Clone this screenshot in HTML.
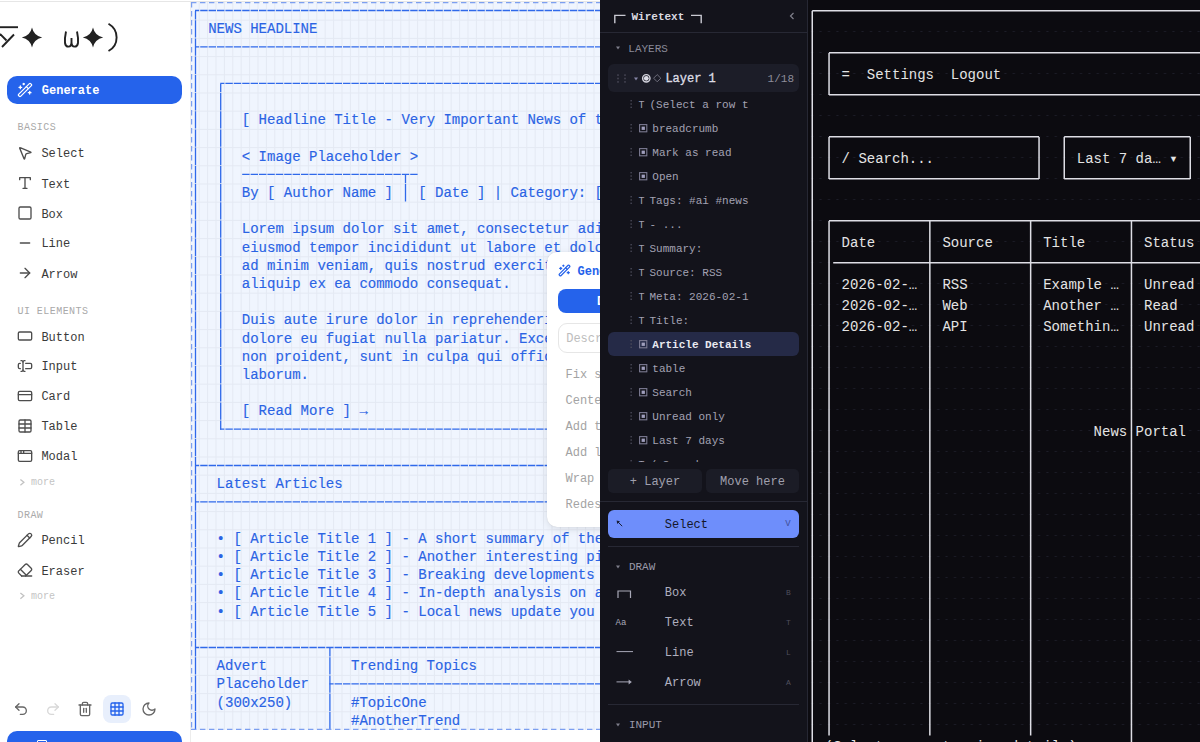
<!DOCTYPE html><html><head><meta charset="utf-8"><style>
html,body{margin:0;padding:0;width:1200px;height:742px;overflow:hidden;background:#fff;}
body{position:relative;font-family:"Liberation Mono",monospace;}
.t{position:absolute;white-space:pre;}
.abs{position:absolute;}
svg{position:absolute;overflow:visible;}
</style></head><body>
<div class="abs" style="left:0;top:0;width:190px;height:742px;background:#fff;"></div>
<div class="abs" style="left:0;top:1px;width:600px;height:1px;background:#e6e6e6;"></div>
<div class="abs" style="left:190px;top:2px;width:1px;height:740px;background:#ececec;"></div>
<svg style="left:0;top:0" width="190" height="60" viewBox="0 0 190 60">
<g fill="none" stroke="#222" stroke-width="1.9" stroke-linecap="butt">
<line x1="0" y1="27.2" x2="18" y2="27.2"/>
<line x1="14" y1="34.5" x2="2" y2="47"/>
<line x1="0" y1="34" x2="6.5" y2="40.5"/>
<path d="M66 31.5 Q64.6 38 65 43 Q65.5 46.6 68.4 46.6 Q71.5 46.6 71.5 42 V38 M71.5 42 Q71.5 46.6 74.6 46.6 Q77.5 46.6 78 43 Q78.4 38 77 31.5" />
<path d="M108.5 23.8 Q116.6 28.5 116.6 37.4 Q116.6 46.5 108.5 51"/>
</g>
<g fill="#222">
<path d="M32 27.5 Q33.8 35.7 42.2 37.5 Q33.8 39.3 32 47.5 Q30.2 39.3 21.8 37.5 Q30.2 35.7 32 27.5Z"/>
<path d="M93 27.5 Q94.8 35.7 103.2 37.5 Q94.8 39.3 93 47.5 Q91.2 39.3 82.8 37.5 Q91.2 35.7 93 27.5Z"/>
</g></svg>
<div class="abs" style="left:7px;top:76px;width:175px;height:28px;border-radius:10px;background:#2563eb;"></div>
<svg style="left:16.8px;top:81.6px" width="16" height="16" viewBox="0 0 24 24" fill="none" stroke="#fff" stroke-width="1.9" stroke-linecap="round" stroke-linejoin="round"><path d="m21.64 3.64-1.28-1.28a1.21 1.21 0 0 0-1.72 0L2.36 18.64a1.21 1.21 0 0 0 0 1.72l1.28 1.28a1.2 1.2 0 0 0 1.72 0L21.64 5.36a1.2 1.2 0 0 0 0-1.72"/><path d="m14 7 3 3"/><path d="M5 6v4"/><path d="M19 14v4"/><path d="M10 2v2"/><path d="M7 8H3"/><path d="M21 16h-4"/><path d="M11 3H9"/></svg>
<div class="t" style="left:41.80px;top:80.76px;font-size:12px;line-height:20px;color:#fff;font-weight:700;letter-spacing:0px;">Generate</div>
<div class="t" style="left:17.50px;top:118.33px;font-size:10px;line-height:20px;color:#a9a9a9;font-weight:400;letter-spacing:0.45px;">BASICS</div>
<svg style="left:17px;top:144.6px" width="16" height="16" viewBox="0 0 24 24" fill="none" stroke="#4d4d4d" stroke-width="2" stroke-linecap="round" stroke-linejoin="round"><path d="M4.037 4.688a.495.495 0 0 1 .651-.651l16 6.5a.5.5 0 0 1-.063.947l-6.124 1.58a2 2 0 0 0-1.438 1.435l-1.579 6.126a.5.5 0 0 1-.947.063z"/></svg>
<div class="t" style="left:41.40px;top:144.36px;font-size:12px;line-height:20px;color:#3a3a3a;font-weight:400;letter-spacing:0px;">Select</div>
<svg style="left:17px;top:175px" width="16" height="16" viewBox="0 0 24 24" fill="none" stroke="#4d4d4d" stroke-width="2" stroke-linecap="round" stroke-linejoin="round"><polyline points="4 7 4 4 20 4 20 7"/><line x1="9" y1="20" x2="15" y2="20"/><line x1="12" y1="4" x2="12" y2="20"/></svg>
<div class="t" style="left:41.40px;top:174.76px;font-size:12px;line-height:20px;color:#3a3a3a;font-weight:400;letter-spacing:0px;">Text</div>
<svg style="left:17px;top:205px" width="16" height="16" viewBox="0 0 24 24" fill="none" stroke="#4d4d4d" stroke-width="2" stroke-linecap="round" stroke-linejoin="round"><rect x="3" y="3" width="18" height="18" rx="2"/></svg>
<div class="t" style="left:41.40px;top:204.76px;font-size:12px;line-height:20px;color:#3a3a3a;font-weight:400;letter-spacing:0px;">Box</div>
<svg style="left:17px;top:234.5px" width="16" height="16" viewBox="0 0 24 24" fill="none" stroke="#4d4d4d" stroke-width="2" stroke-linecap="round" stroke-linejoin="round"><path d="M5 12h14"/></svg>
<div class="t" style="left:41.40px;top:234.26px;font-size:12px;line-height:20px;color:#3a3a3a;font-weight:400;letter-spacing:0px;">Line</div>
<svg style="left:17px;top:265px" width="16" height="16" viewBox="0 0 24 24" fill="none" stroke="#4d4d4d" stroke-width="2" stroke-linecap="round" stroke-linejoin="round"><path d="M5 12h14"/><path d="m12 5 7 7-7 7"/></svg>
<div class="t" style="left:41.40px;top:264.76px;font-size:12px;line-height:20px;color:#3a3a3a;font-weight:400;letter-spacing:0px;">Arrow</div>
<div class="t" style="left:17.50px;top:301.63px;font-size:10px;line-height:20px;color:#a9a9a9;font-weight:400;letter-spacing:0.45px;">UI ELEMENTS</div>
<svg style="left:17px;top:328px" width="16" height="16" viewBox="0 0 24 24" fill="none" stroke="#4d4d4d" stroke-width="2" stroke-linecap="round" stroke-linejoin="round"><rect x="2" y="6" width="20" height="12" rx="2"/></svg>
<div class="t" style="left:41.40px;top:327.76px;font-size:12px;line-height:20px;color:#3a3a3a;font-weight:400;letter-spacing:0px;">Button</div>
<svg style="left:17px;top:357.7px" width="16" height="16" viewBox="0 0 24 24" fill="none" stroke="#4d4d4d" stroke-width="2" stroke-linecap="round" stroke-linejoin="round"><path d="M12 20h-1a2 2 0 0 1-2-2 2 2 0 0 1-2 2H6"/><path d="M13 8h7a2 2 0 0 1 2 2v4a2 2 0 0 1-2 2h-7"/><path d="M5 16H4a2 2 0 0 1-2-2v-4a2 2 0 0 1 2-2h1"/><path d="M6 4h1a2 2 0 0 1 2 2 2 2 0 0 1 2-2h1"/><path d="M9 6v12"/></svg>
<div class="t" style="left:41.40px;top:357.46px;font-size:12px;line-height:20px;color:#3a3a3a;font-weight:400;letter-spacing:0px;">Input</div>
<svg style="left:17px;top:387.7px" width="16" height="16" viewBox="0 0 24 24" fill="none" stroke="#4d4d4d" stroke-width="2" stroke-linecap="round" stroke-linejoin="round"><rect x="2" y="5" width="20" height="14" rx="2"/><line x1="2" y1="10" x2="22" y2="10"/></svg>
<div class="t" style="left:41.40px;top:387.46px;font-size:12px;line-height:20px;color:#3a3a3a;font-weight:400;letter-spacing:0px;">Card</div>
<svg style="left:17px;top:417.7px" width="16" height="16" viewBox="0 0 24 24" fill="none" stroke="#4d4d4d" stroke-width="2" stroke-linecap="round" stroke-linejoin="round"><path d="M12 3v18"/><rect x="3" y="3" width="18" height="18" rx="2"/><path d="M3 9h18"/><path d="M3 15h18"/></svg>
<div class="t" style="left:41.40px;top:417.46px;font-size:12px;line-height:20px;color:#3a3a3a;font-weight:400;letter-spacing:0px;">Table</div>
<svg style="left:17px;top:447.5px" width="16" height="16" viewBox="0 0 24 24" fill="none" stroke="#4d4d4d" stroke-width="2" stroke-linecap="round" stroke-linejoin="round"><rect x="2" y="4" width="20" height="16" rx="2"/><path d="M10 4v4"/><path d="M2 8h20"/><path d="M6 4v4"/></svg>
<div class="t" style="left:41.40px;top:447.26px;font-size:12px;line-height:20px;color:#3a3a3a;font-weight:400;letter-spacing:0px;">Modal</div>
<svg style="left:0;top:0" width="40" height="600"><path d="M20.4 479.4 L23.9 482.3 L20.4 485.2" fill="none" stroke="#c2c2c2" stroke-width="1.3"/></svg>
<div class="t" style="left:31.00px;top:472.63px;font-size:10px;line-height:20px;color:#c4c4c4;font-weight:400;letter-spacing:0px;">more</div>
<div class="t" style="left:17.50px;top:505.63px;font-size:10px;line-height:20px;color:#a9a9a9;font-weight:400;letter-spacing:0.45px;">DRAW</div>
<svg style="left:17px;top:531.5px" width="16" height="16" viewBox="0 0 24 24" fill="none" stroke="#4d4d4d" stroke-width="2" stroke-linecap="round" stroke-linejoin="round"><path d="M21.174 6.812a1 1 0 0 0-3.986-3.987L3.842 16.174a2 2 0 0 0-.5.83l-1.321 4.352a.5.5 0 0 0 .623.622l4.353-1.32a2 2 0 0 0 .83-.497z"/><path d="m15 5 4 4"/></svg>
<div class="t" style="left:41.40px;top:531.26px;font-size:12px;line-height:20px;color:#3a3a3a;font-weight:400;letter-spacing:0px;">Pencil</div>
<svg style="left:17px;top:562px" width="16" height="16" viewBox="0 0 24 24" fill="none" stroke="#4d4d4d" stroke-width="2" stroke-linecap="round" stroke-linejoin="round"><path d="m7 21-4.3-4.3c-1-1-1-2.5 0-3.4l9.6-9.6c1-1 2.5-1 3.4 0l5.6 5.6c1 1 1 2.5 0 3.4L13 21"/><path d="M22 21H7"/><path d="m5 11 9 9"/></svg>
<div class="t" style="left:41.40px;top:561.76px;font-size:12px;line-height:20px;color:#3a3a3a;font-weight:400;letter-spacing:0px;">Eraser</div>
<svg style="left:0;top:0" width="40" height="600"><path d="M20.4 592.9 L23.9 595.8 L20.4 598.7" fill="none" stroke="#c2c2c2" stroke-width="1.3"/></svg>
<div class="t" style="left:31.00px;top:586.63px;font-size:10px;line-height:20px;color:#c4c4c4;font-weight:400;letter-spacing:0px;">more</div>
<svg style="left:13.0px;top:701.0px" width="16" height="16" viewBox="0 0 24 24" fill="none" stroke="#666" stroke-width="2" stroke-linecap="round" stroke-linejoin="round"><path d="M9 14 4 9l5-5"/><path d="M4 9h10.5a5.5 5.5 0 0 1 5.5 5.5a5.5 5.5 0 0 1-5.5 5.5H11"/></svg>
<svg style="left:45.0px;top:701.0px" width="16" height="16" viewBox="0 0 24 24" fill="none" stroke="#d8d8d8" stroke-width="2" stroke-linecap="round" stroke-linejoin="round"><path d="m15 14 5-5-5-5"/><path d="M20 9H9.5A5.5 5.5 0 0 0 4 14.5A5.5 5.5 0 0 0 9.5 20H13"/></svg>
<svg style="left:77.0px;top:701.0px" width="16" height="16" viewBox="0 0 24 24" fill="none" stroke="#666" stroke-width="2" stroke-linecap="round" stroke-linejoin="round"><path d="M3 6h18"/><path d="M19 6v14c0 1-1 2-2 2H7c-1 0-2-1-2-2V6"/><path d="M8 6V4c0-1 1-2 2-2h4c1 0 2 1 2 2v2"/><line x1="10" x2="10" y1="11" y2="17"/><line x1="14" x2="14" y1="11" y2="17"/></svg>
<div class="abs" style="left:103px;top:695px;width:28px;height:28px;border-radius:8px;background:#e8effc;"></div>
<svg style="left:109.0px;top:701.0px" width="16" height="16" viewBox="0 0 24 24" fill="none" stroke="#2563eb" stroke-width="2" stroke-linecap="round" stroke-linejoin="round"><rect x="3" y="3" width="18" height="18" rx="2"/><path d="M3 9h18"/><path d="M3 15h18"/><path d="M9 3v18"/><path d="M15 3v18"/></svg>
<svg style="left:141.0px;top:701.0px" width="16" height="16" viewBox="0 0 24 24" fill="none" stroke="#666" stroke-width="2" stroke-linecap="round" stroke-linejoin="round"><path d="M12 3a6 6 0 0 0 9 9 9 9 0 1 1-9-9Z"/></svg>
<div class="abs" style="left:7px;top:731px;width:175px;height:30px;border-radius:10px;background:#2563eb;"></div>
<div class="abs" style="left:37px;top:740px;width:8px;height:10px;border:1.5px solid #fff;border-radius:1px;"></div>
<div class="abs" style="left:191.0px;top:2.0px;width:409.0px;height:728.0px;background:#f0f5fe;overflow:hidden;">
<svg style="left:0;top:0" width="409.0" height="728.0">
<line x1="8.20" y1="0" x2="8.20" y2="728.0" stroke="#e4e9f3" stroke-width="1"/>
<line x1="16.60" y1="0" x2="16.60" y2="728.0" stroke="#e4e9f3" stroke-width="1"/>
<line x1="25.00" y1="0" x2="25.00" y2="728.0" stroke="#e4e9f3" stroke-width="1"/>
<line x1="33.40" y1="0" x2="33.40" y2="728.0" stroke="#e4e9f3" stroke-width="1"/>
<line x1="41.80" y1="0" x2="41.80" y2="728.0" stroke="#e4e9f3" stroke-width="1"/>
<line x1="50.20" y1="0" x2="50.20" y2="728.0" stroke="#e4e9f3" stroke-width="1"/>
<line x1="58.60" y1="0" x2="58.60" y2="728.0" stroke="#e4e9f3" stroke-width="1"/>
<line x1="67.00" y1="0" x2="67.00" y2="728.0" stroke="#e4e9f3" stroke-width="1"/>
<line x1="75.40" y1="0" x2="75.40" y2="728.0" stroke="#e4e9f3" stroke-width="1"/>
<line x1="83.80" y1="0" x2="83.80" y2="728.0" stroke="#e4e9f3" stroke-width="1"/>
<line x1="92.20" y1="0" x2="92.20" y2="728.0" stroke="#e4e9f3" stroke-width="1"/>
<line x1="100.60" y1="0" x2="100.60" y2="728.0" stroke="#e4e9f3" stroke-width="1"/>
<line x1="109.00" y1="0" x2="109.00" y2="728.0" stroke="#e4e9f3" stroke-width="1"/>
<line x1="117.40" y1="0" x2="117.40" y2="728.0" stroke="#e4e9f3" stroke-width="1"/>
<line x1="125.80" y1="0" x2="125.80" y2="728.0" stroke="#e4e9f3" stroke-width="1"/>
<line x1="134.20" y1="0" x2="134.20" y2="728.0" stroke="#e4e9f3" stroke-width="1"/>
<line x1="142.60" y1="0" x2="142.60" y2="728.0" stroke="#e4e9f3" stroke-width="1"/>
<line x1="151.00" y1="0" x2="151.00" y2="728.0" stroke="#e4e9f3" stroke-width="1"/>
<line x1="159.40" y1="0" x2="159.40" y2="728.0" stroke="#e4e9f3" stroke-width="1"/>
<line x1="167.80" y1="0" x2="167.80" y2="728.0" stroke="#e4e9f3" stroke-width="1"/>
<line x1="176.20" y1="0" x2="176.20" y2="728.0" stroke="#e4e9f3" stroke-width="1"/>
<line x1="184.60" y1="0" x2="184.60" y2="728.0" stroke="#e4e9f3" stroke-width="1"/>
<line x1="193.00" y1="0" x2="193.00" y2="728.0" stroke="#e4e9f3" stroke-width="1"/>
<line x1="201.40" y1="0" x2="201.40" y2="728.0" stroke="#e4e9f3" stroke-width="1"/>
<line x1="209.80" y1="0" x2="209.80" y2="728.0" stroke="#e4e9f3" stroke-width="1"/>
<line x1="218.20" y1="0" x2="218.20" y2="728.0" stroke="#e4e9f3" stroke-width="1"/>
<line x1="226.60" y1="0" x2="226.60" y2="728.0" stroke="#e4e9f3" stroke-width="1"/>
<line x1="235.00" y1="0" x2="235.00" y2="728.0" stroke="#e4e9f3" stroke-width="1"/>
<line x1="243.40" y1="0" x2="243.40" y2="728.0" stroke="#e4e9f3" stroke-width="1"/>
<line x1="251.80" y1="0" x2="251.80" y2="728.0" stroke="#e4e9f3" stroke-width="1"/>
<line x1="260.20" y1="0" x2="260.20" y2="728.0" stroke="#e4e9f3" stroke-width="1"/>
<line x1="268.60" y1="0" x2="268.60" y2="728.0" stroke="#e4e9f3" stroke-width="1"/>
<line x1="277.00" y1="0" x2="277.00" y2="728.0" stroke="#e4e9f3" stroke-width="1"/>
<line x1="285.40" y1="0" x2="285.40" y2="728.0" stroke="#e4e9f3" stroke-width="1"/>
<line x1="293.80" y1="0" x2="293.80" y2="728.0" stroke="#e4e9f3" stroke-width="1"/>
<line x1="302.20" y1="0" x2="302.20" y2="728.0" stroke="#e4e9f3" stroke-width="1"/>
<line x1="310.60" y1="0" x2="310.60" y2="728.0" stroke="#e4e9f3" stroke-width="1"/>
<line x1="319.00" y1="0" x2="319.00" y2="728.0" stroke="#e4e9f3" stroke-width="1"/>
<line x1="327.40" y1="0" x2="327.40" y2="728.0" stroke="#e4e9f3" stroke-width="1"/>
<line x1="335.80" y1="0" x2="335.80" y2="728.0" stroke="#e4e9f3" stroke-width="1"/>
<line x1="344.20" y1="0" x2="344.20" y2="728.0" stroke="#e4e9f3" stroke-width="1"/>
<line x1="352.60" y1="0" x2="352.60" y2="728.0" stroke="#e4e9f3" stroke-width="1"/>
<line x1="361.00" y1="0" x2="361.00" y2="728.0" stroke="#e4e9f3" stroke-width="1"/>
<line x1="369.40" y1="0" x2="369.40" y2="728.0" stroke="#e4e9f3" stroke-width="1"/>
<line x1="377.80" y1="0" x2="377.80" y2="728.0" stroke="#e4e9f3" stroke-width="1"/>
<line x1="386.20" y1="0" x2="386.20" y2="728.0" stroke="#e4e9f3" stroke-width="1"/>
<line x1="394.60" y1="0" x2="394.60" y2="728.0" stroke="#e4e9f3" stroke-width="1"/>
<line x1="403.00" y1="0" x2="403.00" y2="728.0" stroke="#e4e9f3" stroke-width="1"/>
<line x1="0" y1="18.20" x2="409.0" y2="18.20" stroke="#e4e9f3" stroke-width="1"/>
<line x1="0" y1="36.40" x2="409.0" y2="36.40" stroke="#e4e9f3" stroke-width="1"/>
<line x1="0" y1="54.60" x2="409.0" y2="54.60" stroke="#e4e9f3" stroke-width="1"/>
<line x1="0" y1="72.80" x2="409.0" y2="72.80" stroke="#e4e9f3" stroke-width="1"/>
<line x1="0" y1="91.00" x2="409.0" y2="91.00" stroke="#e4e9f3" stroke-width="1"/>
<line x1="0" y1="109.20" x2="409.0" y2="109.20" stroke="#e4e9f3" stroke-width="1"/>
<line x1="0" y1="127.40" x2="409.0" y2="127.40" stroke="#e4e9f3" stroke-width="1"/>
<line x1="0" y1="145.60" x2="409.0" y2="145.60" stroke="#e4e9f3" stroke-width="1"/>
<line x1="0" y1="163.80" x2="409.0" y2="163.80" stroke="#e4e9f3" stroke-width="1"/>
<line x1="0" y1="182.00" x2="409.0" y2="182.00" stroke="#e4e9f3" stroke-width="1"/>
<line x1="0" y1="200.20" x2="409.0" y2="200.20" stroke="#e4e9f3" stroke-width="1"/>
<line x1="0" y1="218.40" x2="409.0" y2="218.40" stroke="#e4e9f3" stroke-width="1"/>
<line x1="0" y1="236.60" x2="409.0" y2="236.60" stroke="#e4e9f3" stroke-width="1"/>
<line x1="0" y1="254.80" x2="409.0" y2="254.80" stroke="#e4e9f3" stroke-width="1"/>
<line x1="0" y1="273.00" x2="409.0" y2="273.00" stroke="#e4e9f3" stroke-width="1"/>
<line x1="0" y1="291.20" x2="409.0" y2="291.20" stroke="#e4e9f3" stroke-width="1"/>
<line x1="0" y1="309.40" x2="409.0" y2="309.40" stroke="#e4e9f3" stroke-width="1"/>
<line x1="0" y1="327.60" x2="409.0" y2="327.60" stroke="#e4e9f3" stroke-width="1"/>
<line x1="0" y1="345.80" x2="409.0" y2="345.80" stroke="#e4e9f3" stroke-width="1"/>
<line x1="0" y1="364.00" x2="409.0" y2="364.00" stroke="#e4e9f3" stroke-width="1"/>
<line x1="0" y1="382.20" x2="409.0" y2="382.20" stroke="#e4e9f3" stroke-width="1"/>
<line x1="0" y1="400.40" x2="409.0" y2="400.40" stroke="#e4e9f3" stroke-width="1"/>
<line x1="0" y1="418.60" x2="409.0" y2="418.60" stroke="#e4e9f3" stroke-width="1"/>
<line x1="0" y1="436.80" x2="409.0" y2="436.80" stroke="#e4e9f3" stroke-width="1"/>
<line x1="0" y1="455.00" x2="409.0" y2="455.00" stroke="#e4e9f3" stroke-width="1"/>
<line x1="0" y1="473.20" x2="409.0" y2="473.20" stroke="#e4e9f3" stroke-width="1"/>
<line x1="0" y1="491.40" x2="409.0" y2="491.40" stroke="#e4e9f3" stroke-width="1"/>
<line x1="0" y1="509.60" x2="409.0" y2="509.60" stroke="#e4e9f3" stroke-width="1"/>
<line x1="0" y1="527.80" x2="409.0" y2="527.80" stroke="#e4e9f3" stroke-width="1"/>
<line x1="0" y1="546.00" x2="409.0" y2="546.00" stroke="#e4e9f3" stroke-width="1"/>
<line x1="0" y1="564.20" x2="409.0" y2="564.20" stroke="#e4e9f3" stroke-width="1"/>
<line x1="0" y1="582.40" x2="409.0" y2="582.40" stroke="#e4e9f3" stroke-width="1"/>
<line x1="0" y1="600.60" x2="409.0" y2="600.60" stroke="#e4e9f3" stroke-width="1"/>
<line x1="0" y1="618.80" x2="409.0" y2="618.80" stroke="#e4e9f3" stroke-width="1"/>
<line x1="0" y1="637.00" x2="409.0" y2="637.00" stroke="#e4e9f3" stroke-width="1"/>
<line x1="0" y1="655.20" x2="409.0" y2="655.20" stroke="#e4e9f3" stroke-width="1"/>
<line x1="0" y1="673.40" x2="409.0" y2="673.40" stroke="#e4e9f3" stroke-width="1"/>
<line x1="0" y1="691.60" x2="409.0" y2="691.60" stroke="#e4e9f3" stroke-width="1"/>
<line x1="0" y1="709.80" x2="409.0" y2="709.80" stroke="#e4e9f3" stroke-width="1"/>
<line x1="4.00" y1="8.50" x2="508.00" y2="8.50" stroke="#2f69ea" stroke-width="1.3" stroke-dasharray="7.4 1" stroke-dashoffset="3.20"/>
<line x1="4.50" y1="9.10" x2="4.50" y2="728.00" stroke="#2f69ea" stroke-width="1.3" stroke-dasharray="17.4 0.8" stroke-dashoffset="9.10"/>
<line x1="4.00" y1="44.90" x2="508.00" y2="44.90" stroke="#2f69ea" stroke-width="1.3" stroke-dasharray="7.4 1" stroke-dashoffset="3.20"/>
<line x1="4.00" y1="463.50" x2="508.00" y2="463.50" stroke="#2f69ea" stroke-width="1.3" stroke-dasharray="7.4 1" stroke-dashoffset="3.20"/>
<line x1="4.00" y1="499.90" x2="508.00" y2="499.90" stroke="#2f69ea" stroke-width="1.3" stroke-dasharray="7.4 1" stroke-dashoffset="3.20"/>
<line x1="4.00" y1="645.50" x2="508.00" y2="645.50" stroke="#2f69ea" stroke-width="1.3" stroke-dasharray="7.4 1" stroke-dashoffset="3.20"/>
<line x1="138.90" y1="646.10" x2="138.90" y2="728.00" stroke="#2f69ea" stroke-width="1.3" stroke-dasharray="17.4 0.8" stroke-dashoffset="9.10"/>
<line x1="138.40" y1="681.90" x2="508.00" y2="681.90" stroke="#2f69ea" stroke-width="1.3" stroke-dasharray="7.4 1" stroke-dashoffset="3.20"/>
<line x1="29.20" y1="81.30" x2="508.00" y2="81.30" stroke="#2f69ea" stroke-width="1.3" stroke-dasharray="7.4 1" stroke-dashoffset="3.20"/>
<line x1="29.70" y1="81.90" x2="29.70" y2="427.70" stroke="#2f69ea" stroke-width="1.3" stroke-dasharray="17.4 0.8" stroke-dashoffset="9.10"/>
<line x1="29.20" y1="427.10" x2="508.00" y2="427.10" stroke="#2f69ea" stroke-width="1.3" stroke-dasharray="7.4 1" stroke-dashoffset="3.20"/>
<line x1="50.20" y1="172.30" x2="226.60" y2="172.30" stroke="#2f69ea" stroke-width="1.3" stroke-dasharray="7.4 1" stroke-dashoffset="7.40"/>
<line x1="214.50" y1="172.90" x2="214.50" y2="200.20" stroke="#2f69ea" stroke-width="1.3" stroke-dasharray="17.4 0.8" stroke-dashoffset="9.10"/>
<path d="M0 0.6 H419.0 M0.6 0 V728.0 M0 727.4 H419.0" fill="none" stroke="#7c9ff0" stroke-width="1.2" stroke-dasharray="5.4 3.6"/>
</svg>
<div class="t" style="left:17.20px;top:17.28px;font-size:14px;line-height:20px;color:#2a63e4;-webkit-text-stroke:0.15px #2a63e4;">NEWS HEADLINE</div>
<div class="t" style="left:50.80px;top:108.28px;font-size:14px;line-height:20px;color:#2a63e4;-webkit-text-stroke:0.15px #2a63e4;">[ Headline Title - Very Important News of the Day ]</div>
<div class="t" style="left:50.80px;top:144.68px;font-size:14px;line-height:20px;color:#2a63e4;-webkit-text-stroke:0.15px #2a63e4;">&lt; Image Placeholder &gt;</div>
<div class="t" style="left:50.80px;top:181.08px;font-size:14px;line-height:20px;color:#2a63e4;-webkit-text-stroke:0.15px #2a63e4;">By [ Author Name ]</div>
<div class="t" style="left:227.20px;top:181.08px;font-size:14px;line-height:20px;color:#2a63e4;-webkit-text-stroke:0.15px #2a63e4;">[ Date ] | Category: [ Politics ]</div>
<div class="t" style="left:50.80px;top:217.48px;font-size:14px;line-height:20px;color:#2a63e4;-webkit-text-stroke:0.15px #2a63e4;">Lorem ipsum dolor sit amet, consectetur adipiscing elit, sed do</div>
<div class="t" style="left:50.80px;top:235.68px;font-size:14px;line-height:20px;color:#2a63e4;-webkit-text-stroke:0.15px #2a63e4;">eiusmod tempor incididunt ut labore et dolore magna aliqua. Ut enim</div>
<div class="t" style="left:50.80px;top:253.88px;font-size:14px;line-height:20px;color:#2a63e4;-webkit-text-stroke:0.15px #2a63e4;">ad minim veniam, quis nostrud exercitation ullamco laboris nisi ut</div>
<div class="t" style="left:50.80px;top:272.08px;font-size:14px;line-height:20px;color:#2a63e4;-webkit-text-stroke:0.15px #2a63e4;">aliquip ex ea commodo consequat.</div>
<div class="t" style="left:50.80px;top:308.48px;font-size:14px;line-height:20px;color:#2a63e4;-webkit-text-stroke:0.15px #2a63e4;">Duis aute irure dolor in reprehenderit in voluptate velit esse</div>
<div class="t" style="left:50.80px;top:326.68px;font-size:14px;line-height:20px;color:#2a63e4;-webkit-text-stroke:0.15px #2a63e4;">dolore eu fugiat nulla pariatur. Excepteur sint occaecat cupidatat</div>
<div class="t" style="left:50.80px;top:344.88px;font-size:14px;line-height:20px;color:#2a63e4;-webkit-text-stroke:0.15px #2a63e4;">non proident, sunt in culpa qui officia deserunt mollit anim id est</div>
<div class="t" style="left:50.80px;top:363.08px;font-size:14px;line-height:20px;color:#2a63e4;-webkit-text-stroke:0.15px #2a63e4;">laborum.</div>
<div class="t" style="left:50.80px;top:399.48px;font-size:14px;line-height:20px;color:#2a63e4;-webkit-text-stroke:0.15px #2a63e4;">[ Read More ] →</div>
<div class="t" style="left:25.60px;top:472.28px;font-size:14px;line-height:20px;color:#2a63e4;-webkit-text-stroke:0.15px #2a63e4;">Latest Articles</div>
<div class="t" style="left:25.60px;top:526.88px;font-size:14px;line-height:20px;color:#2a63e4;-webkit-text-stroke:0.15px #2a63e4;">• [ Article Title 1 ] - A short summary of the article content</div>
<div class="t" style="left:25.60px;top:545.08px;font-size:14px;line-height:20px;color:#2a63e4;-webkit-text-stroke:0.15px #2a63e4;">• [ Article Title 2 ] - Another interesting piece of news</div>
<div class="t" style="left:25.60px;top:563.28px;font-size:14px;line-height:20px;color:#2a63e4;-webkit-text-stroke:0.15px #2a63e4;">• [ Article Title 3 ] - Breaking developments in the story</div>
<div class="t" style="left:25.60px;top:581.48px;font-size:14px;line-height:20px;color:#2a63e4;-webkit-text-stroke:0.15px #2a63e4;">• [ Article Title 4 ] - In-depth analysis on a current topic</div>
<div class="t" style="left:25.60px;top:599.68px;font-size:14px;line-height:20px;color:#2a63e4;-webkit-text-stroke:0.15px #2a63e4;">• [ Article Title 5 ] - Local news update you should know</div>
<div class="t" style="left:25.60px;top:654.28px;font-size:14px;line-height:20px;color:#2a63e4;-webkit-text-stroke:0.15px #2a63e4;">Advert</div>
<div class="t" style="left:160.00px;top:654.28px;font-size:14px;line-height:20px;color:#2a63e4;-webkit-text-stroke:0.15px #2a63e4;">Trending Topics</div>
<div class="t" style="left:25.60px;top:672.48px;font-size:14px;line-height:20px;color:#2a63e4;-webkit-text-stroke:0.15px #2a63e4;">Placeholder</div>
<div class="t" style="left:25.60px;top:690.68px;font-size:14px;line-height:20px;color:#2a63e4;-webkit-text-stroke:0.15px #2a63e4;">(300x250)</div>
<div class="t" style="left:160.00px;top:690.68px;font-size:14px;line-height:20px;color:#2a63e4;-webkit-text-stroke:0.15px #2a63e4;">#TopicOne</div>
<div class="t" style="left:160.00px;top:708.88px;font-size:14px;line-height:20px;color:#2a63e4;-webkit-text-stroke:0.15px #2a63e4;">#AnotherTrend</div>
</div>
<div class="abs" style="left:546.5px;top:251.5px;width:120px;height:275px;border-radius:10px;background:#fff;box-shadow:0 2px 8px rgba(0,0,0,0.10), 0 0 1px rgba(0,0,0,0.15);"></div>
<svg style="left:557.5px;top:264px" width="13" height="13" viewBox="0 0 24 24" fill="none" stroke="#2563eb" stroke-width="2.2" stroke-linecap="round" stroke-linejoin="round"><path d="m21.64 3.64-1.28-1.28a1.21 1.21 0 0 0-1.72 0L2.36 18.64a1.21 1.21 0 0 0 0 1.72l1.28 1.28a1.2 1.2 0 0 0 1.72 0L21.64 5.36a1.2 1.2 0 0 0 0-1.72"/><path d="m14 7 3 3"/><path d="M5 6v4"/><path d="M19 14v4"/><path d="M10 2v2"/><path d="M7 8H3"/><path d="M21 16h-4"/><path d="M11 3H9"/></svg>
<div class="t" style="left:577.50px;top:261.76px;font-size:12px;line-height:20px;color:#2563eb;font-weight:700;letter-spacing:0px;">Generate</div>
<div class="abs" style="left:558px;top:289px;width:120px;height:24px;border-radius:8px;background:#2563eb;"></div>
<div class="t" style="left:597.00px;top:291.76px;font-size:12px;line-height:20px;color:#fff;font-weight:700;letter-spacing:0px;">Do it</div>
<div class="abs" style="left:557.5px;top:322.5px;width:120px;height:30px;border-radius:9px;border:1px solid #e6e6e6;box-sizing:border-box;"></div>
<div class="t" style="left:566.20px;top:328.76px;font-size:12px;line-height:20px;color:#bdbdbd;font-weight:400;letter-spacing:0px;">Describe a change</div>
<div class="t" style="left:565.50px;top:365.36px;font-size:12px;line-height:20px;color:#a3a3a3;font-weight:400;letter-spacing:0px;">Fix spacing</div>
<div class="t" style="left:565.50px;top:391.21px;font-size:12px;line-height:20px;color:#a3a3a3;font-weight:400;letter-spacing:0px;">Center align</div>
<div class="t" style="left:565.50px;top:417.06px;font-size:12px;line-height:20px;color:#a3a3a3;font-weight:400;letter-spacing:0px;">Add title</div>
<div class="t" style="left:565.50px;top:442.91px;font-size:12px;line-height:20px;color:#a3a3a3;font-weight:400;letter-spacing:0px;">Add labels</div>
<div class="t" style="left:565.50px;top:468.76px;font-size:12px;line-height:20px;color:#a3a3a3;font-weight:400;letter-spacing:0px;">Wrap text</div>
<div class="t" style="left:565.50px;top:494.61px;font-size:12px;line-height:20px;color:#a3a3a3;font-weight:400;letter-spacing:0px;">Redesign</div>
<div class="abs" style="left:600px;top:0;width:208px;height:742px;background:#13131b;overflow:hidden;">
<div class="abs" style="left:207.00px;top:0.00px;width:1.00px;height:742.00px;background:#262733;border-radius:0px;"></div>
<svg style="left:0;top:0" width="208" height="40"><g fill="none" stroke="#c9c9d2" stroke-width="1.4">
<path d="M14.8 23.2 V15.4 H25.5"/><path d="M91 15.4 H101.2 V23.2"/></g>
<path d="M193.5 13 L190.5 16 L193.5 19" fill="none" stroke="#80808c" stroke-width="1.2"/></svg>
<div class="t" style="left:31.50px;top:6.89px;font-size:11px;line-height:20px;color:#d9d9e0;font-weight:700;letter-spacing:0px;">Wiretext</div>
<div class="abs" style="left:0.00px;top:32.00px;width:207.00px;height:1.00px;background:#272834;border-radius:0px;"></div>
<svg style="left:16px;top:46px" width="4" height="4"><path d="M0 0.5 H4 L2 3.5Z" fill="#7d7d8a"/></svg>
<div class="t" style="left:28.30px;top:38.59px;font-size:11px;line-height:20px;color:#8a8a99;font-weight:400;letter-spacing:0px;">LAYERS</div>
<div class="abs" style="left:8.00px;top:64.00px;width:191.00px;height:28.00px;background:#1c1d28;border-radius:6px;"></div>
<svg style="left:17px;top:73.5px" width="10" height="10"><g fill="#4c4c5a"><rect x="0.3" y="0.3" width="1.4" height="1.6"/><rect x="0.3" y="3.7" width="1.4" height="1.6"/><rect x="0.3" y="7.1" width="1.4" height="1.6"/><rect x="7.3" y="0.3" width="1.4" height="1.6"/><rect x="7.3" y="3.7" width="1.4" height="1.6"/><rect x="7.3" y="7.1" width="1.4" height="1.6"/></g></svg>
<svg style="left:33.5px;top:76.5px" width="4" height="4"><path d="M0 0.5 H4 L2 3.5Z" fill="#8585a5"/></svg>
<svg style="left:41.5px;top:73.8px" width="9" height="9"><circle cx="4.3" cy="4.3" r="3.7" fill="none" stroke="#d4d4de" stroke-width="1.4"/><circle cx="4.3" cy="4.3" r="2.4" fill="#dcdce6"/></svg>
<svg style="left:53px;top:73.5px" width="9" height="9"><path d="M4.2 0.6 L7.8 4.2 L4.2 7.8 L0.6 4.2Z" fill="none" stroke="#6e6e7c" stroke-width="1"/></svg>
<div class="t" style="left:65.4px;top:68.66px;font-size:12px;line-height:20px;color:#dcdce4;-webkit-text-stroke:0.35px #dcdce4;">Layer 1</div>
<div class="t" style="left:167.60px;top:68.59px;font-size:11px;line-height:20px;color:#8e8e9c;font-weight:400;letter-spacing:0px;">1/18</div>
<div class="abs" style="left:0;top:92px;width:208px;height:369.5px;overflow:hidden;">
<svg style="left:30px;top:7.90px" width="3" height="9"><g fill="#4e4e5c"><rect x="0.5" y="0" width="1.3" height="1.4"/><rect x="0.5" y="3.3" width="1.3" height="1.4"/><rect x="0.5" y="6.6" width="1.3" height="1.4"/></g></svg>
<div class="t" style="left:38.40px;top:3.63px;font-size:10px;line-height:20px;color:#a3a2b3;font-weight:400;">T</div>
<div class="t" style="left:49.50px;top:3.19px;font-size:11px;line-height:20px;color:#a3a2b3;font-weight:400;">(Select a row t</div>
<svg style="left:30px;top:31.90px" width="3" height="9"><g fill="#4e4e5c"><rect x="0.5" y="0" width="1.3" height="1.4"/><rect x="0.5" y="3.3" width="1.3" height="1.4"/><rect x="0.5" y="6.6" width="1.3" height="1.4"/></g></svg>
<svg style="left:38.8px;top:31.70px" width="9" height="9"><rect x="0.6" y="0.6" width="7.2" height="7.2" fill="none" stroke="#7c7b92" stroke-width="1.1"/><rect x="2.6" y="2.6" width="3.3" height="3.3" fill="#a09fbd"/></svg>
<div class="t" style="left:52.30px;top:27.19px;font-size:11px;line-height:20px;color:#a3a2b3;font-weight:400;">breadcrumb</div>
<svg style="left:30px;top:55.90px" width="3" height="9"><g fill="#4e4e5c"><rect x="0.5" y="0" width="1.3" height="1.4"/><rect x="0.5" y="3.3" width="1.3" height="1.4"/><rect x="0.5" y="6.6" width="1.3" height="1.4"/></g></svg>
<svg style="left:38.8px;top:55.70px" width="9" height="9"><rect x="0.6" y="0.6" width="7.2" height="7.2" fill="none" stroke="#7c7b92" stroke-width="1.1"/><rect x="2.6" y="2.6" width="3.3" height="3.3" fill="#a09fbd"/></svg>
<div class="t" style="left:52.30px;top:51.19px;font-size:11px;line-height:20px;color:#a3a2b3;font-weight:400;">Mark as read</div>
<svg style="left:30px;top:79.90px" width="3" height="9"><g fill="#4e4e5c"><rect x="0.5" y="0" width="1.3" height="1.4"/><rect x="0.5" y="3.3" width="1.3" height="1.4"/><rect x="0.5" y="6.6" width="1.3" height="1.4"/></g></svg>
<svg style="left:38.8px;top:79.70px" width="9" height="9"><rect x="0.6" y="0.6" width="7.2" height="7.2" fill="none" stroke="#7c7b92" stroke-width="1.1"/><rect x="2.6" y="2.6" width="3.3" height="3.3" fill="#a09fbd"/></svg>
<div class="t" style="left:52.30px;top:75.19px;font-size:11px;line-height:20px;color:#a3a2b3;font-weight:400;">Open</div>
<svg style="left:30px;top:103.90px" width="3" height="9"><g fill="#4e4e5c"><rect x="0.5" y="0" width="1.3" height="1.4"/><rect x="0.5" y="3.3" width="1.3" height="1.4"/><rect x="0.5" y="6.6" width="1.3" height="1.4"/></g></svg>
<div class="t" style="left:38.40px;top:99.63px;font-size:10px;line-height:20px;color:#a3a2b3;font-weight:400;">T</div>
<div class="t" style="left:49.50px;top:99.19px;font-size:11px;line-height:20px;color:#a3a2b3;font-weight:400;">Tags: #ai #news</div>
<svg style="left:30px;top:127.90px" width="3" height="9"><g fill="#4e4e5c"><rect x="0.5" y="0" width="1.3" height="1.4"/><rect x="0.5" y="3.3" width="1.3" height="1.4"/><rect x="0.5" y="6.6" width="1.3" height="1.4"/></g></svg>
<div class="t" style="left:38.40px;top:123.63px;font-size:10px;line-height:20px;color:#a3a2b3;font-weight:400;">T</div>
<div class="t" style="left:49.50px;top:123.19px;font-size:11px;line-height:20px;color:#a3a2b3;font-weight:400;">- ...</div>
<svg style="left:30px;top:151.90px" width="3" height="9"><g fill="#4e4e5c"><rect x="0.5" y="0" width="1.3" height="1.4"/><rect x="0.5" y="3.3" width="1.3" height="1.4"/><rect x="0.5" y="6.6" width="1.3" height="1.4"/></g></svg>
<div class="t" style="left:38.40px;top:147.63px;font-size:10px;line-height:20px;color:#a3a2b3;font-weight:400;">T</div>
<div class="t" style="left:49.50px;top:147.19px;font-size:11px;line-height:20px;color:#a3a2b3;font-weight:400;">Summary:</div>
<svg style="left:30px;top:175.90px" width="3" height="9"><g fill="#4e4e5c"><rect x="0.5" y="0" width="1.3" height="1.4"/><rect x="0.5" y="3.3" width="1.3" height="1.4"/><rect x="0.5" y="6.6" width="1.3" height="1.4"/></g></svg>
<div class="t" style="left:38.40px;top:171.63px;font-size:10px;line-height:20px;color:#a3a2b3;font-weight:400;">T</div>
<div class="t" style="left:49.50px;top:171.19px;font-size:11px;line-height:20px;color:#a3a2b3;font-weight:400;">Source: RSS</div>
<svg style="left:30px;top:199.90px" width="3" height="9"><g fill="#4e4e5c"><rect x="0.5" y="0" width="1.3" height="1.4"/><rect x="0.5" y="3.3" width="1.3" height="1.4"/><rect x="0.5" y="6.6" width="1.3" height="1.4"/></g></svg>
<div class="t" style="left:38.40px;top:195.63px;font-size:10px;line-height:20px;color:#a3a2b3;font-weight:400;">T</div>
<div class="t" style="left:49.50px;top:195.19px;font-size:11px;line-height:20px;color:#a3a2b3;font-weight:400;">Meta: 2026-02-1</div>
<svg style="left:30px;top:223.90px" width="3" height="9"><g fill="#4e4e5c"><rect x="0.5" y="0" width="1.3" height="1.4"/><rect x="0.5" y="3.3" width="1.3" height="1.4"/><rect x="0.5" y="6.6" width="1.3" height="1.4"/></g></svg>
<div class="t" style="left:38.40px;top:219.63px;font-size:10px;line-height:20px;color:#a3a2b3;font-weight:400;">T</div>
<div class="t" style="left:49.50px;top:219.19px;font-size:11px;line-height:20px;color:#a3a2b3;font-weight:400;">Title:</div>
<div class="abs" style="left:8px;top:240px;width:191px;height:24px;background:#252a47;border-radius:6px;"></div>
<svg style="left:30px;top:247.90px" width="3" height="9"><g fill="#4e4e5c"><rect x="0.5" y="0" width="1.3" height="1.4"/><rect x="0.5" y="3.3" width="1.3" height="1.4"/><rect x="0.5" y="6.6" width="1.3" height="1.4"/></g></svg>
<svg style="left:38.8px;top:247.70px" width="9" height="9"><rect x="0.6" y="0.6" width="7.2" height="7.2" fill="none" stroke="#7c7b92" stroke-width="1.1"/><rect x="2.6" y="2.6" width="3.3" height="3.3" fill="#a09fbd"/></svg>
<div class="t" style="left:52.30px;top:243.19px;font-size:11px;line-height:20px;color:#e9e9f0;font-weight:700;">Article Details</div>
<svg style="left:30px;top:271.90px" width="3" height="9"><g fill="#4e4e5c"><rect x="0.5" y="0" width="1.3" height="1.4"/><rect x="0.5" y="3.3" width="1.3" height="1.4"/><rect x="0.5" y="6.6" width="1.3" height="1.4"/></g></svg>
<svg style="left:38.8px;top:271.70px" width="9" height="9"><rect x="0.6" y="0.6" width="7.2" height="7.2" fill="none" stroke="#7c7b92" stroke-width="1.1"/><rect x="2.6" y="2.6" width="3.3" height="3.3" fill="#a09fbd"/></svg>
<div class="t" style="left:52.30px;top:267.19px;font-size:11px;line-height:20px;color:#a3a2b3;font-weight:400;">table</div>
<svg style="left:30px;top:295.90px" width="3" height="9"><g fill="#4e4e5c"><rect x="0.5" y="0" width="1.3" height="1.4"/><rect x="0.5" y="3.3" width="1.3" height="1.4"/><rect x="0.5" y="6.6" width="1.3" height="1.4"/></g></svg>
<svg style="left:38.8px;top:295.70px" width="9" height="9"><rect x="0.6" y="0.6" width="7.2" height="7.2" fill="none" stroke="#7c7b92" stroke-width="1.1"/><rect x="2.6" y="2.6" width="3.3" height="3.3" fill="#a09fbd"/></svg>
<div class="t" style="left:52.30px;top:291.19px;font-size:11px;line-height:20px;color:#a3a2b3;font-weight:400;">Search</div>
<svg style="left:30px;top:319.90px" width="3" height="9"><g fill="#4e4e5c"><rect x="0.5" y="0" width="1.3" height="1.4"/><rect x="0.5" y="3.3" width="1.3" height="1.4"/><rect x="0.5" y="6.6" width="1.3" height="1.4"/></g></svg>
<svg style="left:38.8px;top:319.70px" width="9" height="9"><rect x="0.6" y="0.6" width="7.2" height="7.2" fill="none" stroke="#7c7b92" stroke-width="1.1"/><rect x="2.6" y="2.6" width="3.3" height="3.3" fill="#a09fbd"/></svg>
<div class="t" style="left:52.30px;top:315.19px;font-size:11px;line-height:20px;color:#a3a2b3;font-weight:400;">Unread only</div>
<svg style="left:30px;top:343.90px" width="3" height="9"><g fill="#4e4e5c"><rect x="0.5" y="0" width="1.3" height="1.4"/><rect x="0.5" y="3.3" width="1.3" height="1.4"/><rect x="0.5" y="6.6" width="1.3" height="1.4"/></g></svg>
<svg style="left:38.8px;top:343.70px" width="9" height="9"><rect x="0.6" y="0.6" width="7.2" height="7.2" fill="none" stroke="#7c7b92" stroke-width="1.1"/><rect x="2.6" y="2.6" width="3.3" height="3.3" fill="#a09fbd"/></svg>
<div class="t" style="left:52.30px;top:339.19px;font-size:11px;line-height:20px;color:#a3a2b3;font-weight:400;">Last 7 days</div>
<svg style="left:30px;top:367.90px" width="3" height="9"><g fill="#4e4e5c"><rect x="0.5" y="0" width="1.3" height="1.4"/><rect x="0.5" y="3.3" width="1.3" height="1.4"/><rect x="0.5" y="6.6" width="1.3" height="1.4"/></g></svg>
<div class="t" style="left:38.40px;top:363.63px;font-size:10px;line-height:20px;color:#a3a2b3;font-weight:400;">T</div>
<div class="t" style="left:49.50px;top:363.19px;font-size:11px;line-height:20px;color:#a3a2b3;font-weight:400;">/ Search...</div>
</div>
<div class="abs" style="left:8.00px;top:469.00px;width:94.00px;height:24.00px;background:#1b1c26;border-radius:5px;"></div>
<div class="abs" style="left:106.00px;top:469.00px;width:93.00px;height:24.00px;background:#1b1c26;border-radius:5px;"></div>
<div class="t" style="left:29.80px;top:471.76px;font-size:12px;line-height:20px;color:#a0a0ae;font-weight:400;letter-spacing:0px;">+ Layer</div>
<div class="t" style="left:120.10px;top:471.76px;font-size:12px;line-height:20px;color:#a0a0ae;font-weight:400;letter-spacing:0px;">Move here</div>
<div class="abs" style="left:0.00px;top:501.00px;width:207.00px;height:1.00px;background:#272834;border-radius:0px;"></div>
<div class="abs" style="left:8.00px;top:510.00px;width:191.00px;height:28.00px;background:#6e8efb;border-radius:6px;"></div>
<svg style="left:16px;top:520px" width="8" height="8"><path d="M1.2 1.2 L6.2 6.2" fill="none" stroke="#1a1f3a" stroke-width="1"/><path d="M0.6 0.6 L4 1.2 L1.2 4Z" fill="#1a1f3a"/></svg>
<div class="t" style="left:64.80px;top:514.76px;font-size:12px;line-height:20px;color:#15172a;font-weight:400;letter-spacing:0px;">Select</div>
<div class="t" style="left:185.30px;top:514.37px;font-size:9px;line-height:20px;color:#3f4f9a;font-weight:400;letter-spacing:0px;">V</div>
<div class="abs" style="left:8.00px;top:546.00px;width:191.00px;height:1.00px;background:#272834;border-radius:0px;"></div>
<svg style="left:15.8px;top:565px" width="4" height="4"><path d="M0 0.5 H4 L2 3.5Z" fill="#7d7d8a"/></svg>
<div class="t" style="left:28.90px;top:556.69px;font-size:11px;line-height:20px;color:#9a9aaa;font-weight:400;letter-spacing:0px;">DRAW</div>
<svg style="left:17px;top:590px" width="15" height="9"><path d="M1 8 V1 H13.5 V8" fill="none" stroke="#a9a9b8" stroke-width="1.2"/></svg>
<div class="t" style="left:64.80px;top:583.46px;font-size:12px;line-height:20px;color:#afafbf;font-weight:400;letter-spacing:0px;">Box</div>
<div class="t" style="left:186.00px;top:582.70px;font-size:8px;line-height:20px;color:#4e4e5c;font-weight:400;letter-spacing:0px;">B</div>
<div class="t" style="left:15.60px;top:612.87px;font-size:9px;line-height:20px;color:#a8a8b8;font-weight:400;letter-spacing:0px;">Aa</div>
<div class="t" style="left:64.80px;top:613.36px;font-size:12px;line-height:20px;color:#afafbf;font-weight:400;letter-spacing:0px;">Text</div>
<div class="t" style="left:186.00px;top:612.50px;font-size:8px;line-height:20px;color:#4e4e5c;font-weight:400;letter-spacing:0px;">T</div>
<svg style="left:15.5px;top:645px" width="18" height="14"><path d="M0.5 6.6 H17" stroke="#a8a8b8" stroke-width="1"/><path d="M0.5 36.9 H13" stroke="#a8a8b8" stroke-width="1"/><path d="M12.6 34.4 L15.8 36.9 L12.6 39.4Z" fill="#a8a8b8"/></svg>
<div class="t" style="left:64.80px;top:643.36px;font-size:12px;line-height:20px;color:#afafbf;font-weight:400;letter-spacing:0px;">Line</div>
<div class="t" style="left:186.00px;top:642.50px;font-size:8px;line-height:20px;color:#4e4e5c;font-weight:400;letter-spacing:0px;">L</div>
<div class="t" style="left:64.80px;top:673.26px;font-size:12px;line-height:20px;color:#afafbf;font-weight:400;letter-spacing:0px;">Arrow</div>
<div class="t" style="left:186.00px;top:672.50px;font-size:8px;line-height:20px;color:#4e4e5c;font-weight:400;letter-spacing:0px;">A</div>
<div class="abs" style="left:8.00px;top:704.00px;width:191.00px;height:1.00px;background:#272834;border-radius:0px;"></div>
<svg style="left:15.8px;top:723px" width="4" height="4"><path d="M0 0.5 H4 L2 3.5Z" fill="#7d7d8a"/></svg>
<div class="t" style="left:28.90px;top:714.89px;font-size:11px;line-height:20px;color:#9a9aaa;font-weight:400;letter-spacing:0px;">INPUT</div>
</div>
<div class="abs" style="left:808px;top:0;width:392px;height:742px;background:#0c0b10;overflow:hidden;">
<svg style="left:0;top:0" width="392" height="742"><defs><pattern id="dp" x="0" y="0" width="8.4" height="21" patternUnits="userSpaceOnUse"><rect x="3.2" y="10" width="2" height="1" fill="#1e1e29"/></pattern></defs><rect x="0" y="0" width="392" height="742" fill="url(#dp)"/>
<line x1="4.20" y1="10.80" x2="508.20" y2="10.80" stroke="#dedee5" stroke-width="1.5"/>
<line x1="4.25" y1="11.00" x2="4.25" y2="851.00" stroke="#dedee5" stroke-width="1.5"/>
<line x1="21.00" y1="52.80" x2="508.20" y2="52.80" stroke="#dedee5" stroke-width="1.5"/>
<line x1="21.00" y1="94.80" x2="508.20" y2="94.80" stroke="#dedee5" stroke-width="1.5"/>
<line x1="21.05" y1="53.00" x2="21.05" y2="95.00" stroke="#dedee5" stroke-width="1.5"/>
<line x1="21.00" y1="136.80" x2="231.00" y2="136.80" stroke="#dedee5" stroke-width="1.5"/>
<line x1="21.00" y1="178.80" x2="231.00" y2="178.80" stroke="#dedee5" stroke-width="1.5"/>
<line x1="21.05" y1="137.00" x2="21.05" y2="179.00" stroke="#dedee5" stroke-width="1.5"/>
<line x1="231.05" y1="137.00" x2="231.05" y2="179.00" stroke="#dedee5" stroke-width="1.5"/>
<line x1="256.20" y1="136.80" x2="382.20" y2="136.80" stroke="#dedee5" stroke-width="1.5"/>
<line x1="256.20" y1="178.80" x2="382.20" y2="178.80" stroke="#dedee5" stroke-width="1.5"/>
<line x1="256.25" y1="137.00" x2="256.25" y2="179.00" stroke="#dedee5" stroke-width="1.5"/>
<line x1="382.25" y1="137.00" x2="382.25" y2="179.00" stroke="#dedee5" stroke-width="1.5"/>
<line x1="21.00" y1="220.80" x2="508.20" y2="220.80" stroke="#dedee5" stroke-width="1.5"/>
<line x1="21.05" y1="221.00" x2="21.05" y2="735.50" stroke="#dedee5" stroke-width="1.5"/>
<line x1="121.85" y1="221.00" x2="121.85" y2="735.50" stroke="#dedee5" stroke-width="1.5"/>
<line x1="222.65" y1="221.00" x2="222.65" y2="735.50" stroke="#dedee5" stroke-width="1.5"/>
<line x1="323.45" y1="221.00" x2="323.45" y2="851.00" stroke="#dedee5" stroke-width="1.5"/>
<line x1="25.20" y1="262.80" x2="508.20" y2="262.80" stroke="#dedee5" stroke-width="1.5"/>
</svg>
<div class="t" style="left:33.60px;top:64.88px;font-size:14px;line-height:21px;color:#e4e4e4;">=</div>
<div class="t" style="left:58.80px;top:64.88px;font-size:14px;line-height:21px;color:#e4e4e4;">Settings</div>
<div class="t" style="left:142.80px;top:64.88px;font-size:14px;line-height:21px;color:#e4e4e4;">Logout</div>
<div class="t" style="left:33.60px;top:148.88px;font-size:14px;line-height:21px;color:#e4e4e4;">/</div>
<div class="t" style="left:50.40px;top:148.88px;font-size:14px;line-height:21px;color:#e4e4e4;">Search...</div>
<div class="t" style="left:268.80px;top:148.88px;font-size:14px;line-height:21px;color:#e4e4e4;">Last 7 da…</div>
<div class="t" style="left:361.20px;top:148.88px;font-size:14px;line-height:21px;color:#e4e4e4;">▾</div>
<div class="t" style="left:33.60px;top:232.88px;font-size:14px;line-height:21px;color:#e4e4e4;">Date</div>
<div class="t" style="left:134.40px;top:232.88px;font-size:14px;line-height:21px;color:#e4e4e4;">Source</div>
<div class="t" style="left:235.20px;top:232.88px;font-size:14px;line-height:21px;color:#e4e4e4;">Title</div>
<div class="t" style="left:336.00px;top:232.88px;font-size:14px;line-height:21px;color:#e4e4e4;">Status</div>
<div class="t" style="left:33.60px;top:274.88px;font-size:14px;line-height:21px;color:#e4e4e4;">2026-02-…</div>
<div class="t" style="left:134.40px;top:274.88px;font-size:14px;line-height:21px;color:#e4e4e4;">RSS</div>
<div class="t" style="left:235.20px;top:274.88px;font-size:14px;line-height:21px;color:#e4e4e4;">Example …</div>
<div class="t" style="left:336.00px;top:274.88px;font-size:14px;line-height:21px;color:#e4e4e4;">Unread</div>
<div class="t" style="left:33.60px;top:295.88px;font-size:14px;line-height:21px;color:#e4e4e4;">2026-02-…</div>
<div class="t" style="left:134.40px;top:295.88px;font-size:14px;line-height:21px;color:#e4e4e4;">Web</div>
<div class="t" style="left:235.20px;top:295.88px;font-size:14px;line-height:21px;color:#e4e4e4;">Another …</div>
<div class="t" style="left:336.00px;top:295.88px;font-size:14px;line-height:21px;color:#e4e4e4;">Read</div>
<div class="t" style="left:33.60px;top:316.88px;font-size:14px;line-height:21px;color:#e4e4e4;">2026-02-…</div>
<div class="t" style="left:134.40px;top:316.88px;font-size:14px;line-height:21px;color:#e4e4e4;">API</div>
<div class="t" style="left:235.20px;top:316.88px;font-size:14px;line-height:21px;color:#e4e4e4;">Somethin…</div>
<div class="t" style="left:336.00px;top:316.88px;font-size:14px;line-height:21px;color:#e4e4e4;">Unread</div>
<div class="t" style="left:285.60px;top:421.88px;font-size:14px;line-height:21px;color:#e4e4e4;">News</div>
<div class="t" style="left:327.60px;top:421.88px;font-size:14px;line-height:21px;color:#e4e4e4;">Portal</div>
<div class="t" style="left:16.80px;top:736.88px;font-size:14px;line-height:21px;color:#e4e4e4;">(Select a row to view details)</div>
</div>
</body></html>
